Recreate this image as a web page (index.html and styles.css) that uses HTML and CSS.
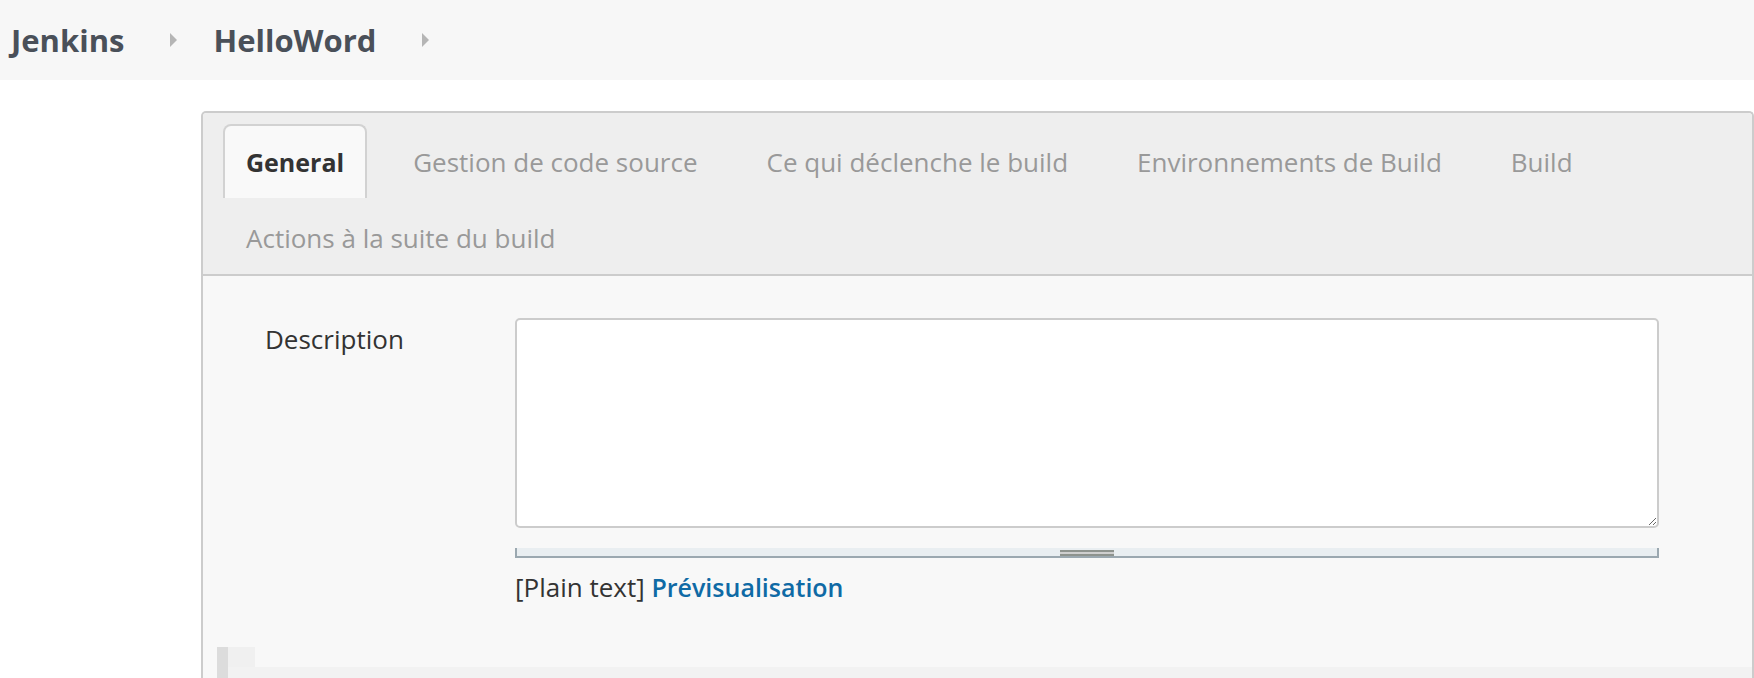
FILE: index.html
```html
<!DOCTYPE html>
<html lang="fr">
<head>
<meta charset="utf-8">
<title>HelloWord Config [Jenkins]</title>
<link rel="stylesheet" href="styles.css">
</head>
<body>
<header class="breadcrumbs">
  <a class="crumb" href="#">Jenkins</a>
  <span class="crumb-arrow"></span>
  <a class="crumb" href="#">HelloWord</a>
  <span class="crumb-arrow"></span>
</header>
<main class="main">
  <section class="config-panel">
    <nav class="tabbar">
      <span class="tab tab-active">General</span>
      <span class="tab">Gestion de code source</span>
      <span class="tab">Ce qui déclenche le build</span>
      <span class="tab">Environnements de Build</span>
      <span class="tab">Build</span>
      <span class="tab">Actions à la suite du build</span>
    </nav>
    <div class="tab-content">
      <div class="form-row">
        <label class="form-label" for="desc">Description</label>
        <div class="form-field">
          <textarea id="desc" class="desc-input"></textarea>
          <div class="resize-bar"><span class="grip"></span></div>
          <div class="format-line">[Plain text] <a href="#" class="preview-link">Prévisualisation</a></div>
        </div>
      </div>
      <div class="next-section">
        <div class="next-section-head"></div>
        <div class="next-section-band"></div>
      </div>
    </div>
  </section>
</main>
</body>
</html>
```
FILE: styles.css
```css
html, body {
  margin: 0;
  padding: 0;
  background: #ffffff;
  font-family: "Open Sans", "Noto Sans", sans-serif;
  color: #333333;
}

.breadcrumbs {
  height: 80px;
  background: #f7f7f7;
  display: flex;
  align-items: center;
  padding-left: 11px;
}

.crumb {
  font-size: 31px;
  font-weight: 700;
  color: #4a5059;
  text-decoration: none;
}

.crumb-arrow {
  width: 0;
  height: 0;
  border-top: 7px solid transparent;
  border-bottom: 7px solid transparent;
  border-left: 7px solid #b5b5b5;
  margin: 0 36px 0 46px;
}

.main {
  padding: 31px 0 0 201px;
}

.config-panel {
  border: 2px solid #cccccc;
  border-bottom: none;
  border-radius: 5px 5px 0 0;
  background: #f8f8f8;
}

.tabbar {
  background: #eeeeee;
  border-bottom: 2px solid #cccccc;
  border-radius: 4px 4px 0 0;
  padding: 11px 0 0 20px;
  display: flex;
  flex-wrap: wrap;
  row-gap: 2px;
}

.tab {
  height: 74px;
  box-sizing: border-box;
  padding: 0 21px;
  margin-right: 23px;
  display: flex;
  align-items: center;
  font-size: 26px;
  color: #999999;
  border: 2px solid transparent;
  border-bottom: none;
}

.tab-active {
  background: #f9f9f9;
  border-color: #d2d2d2;
  border-radius: 8px 8px 0 0;
  color: #333333;
  font-weight: 700;
  font-size: 25px;
}

.tab-content {
  background: #f8f8f8;
  padding-top: 42px;
}

.form-row {
  display: grid;
  grid-template-columns: 250px 1144px;
  padding-left: 62px;
}

.form-label {
  font-size: 26px;
  color: #333333;
  padding-top: 3px;
}

.form-field {
  display: flex;
  flex-direction: column;
}

.desc-input {
  height: 210px;
  box-sizing: border-box;
  border: 2px solid #cccccc;
  border-radius: 5px;
  background: #ffffff;
  resize: vertical;
  margin: 0;
}

.resize-bar {
  margin-top: 20px;
  height: 10px;
  box-sizing: border-box;
  background: #e9eef1;
  border: 2px solid #9ba8b0;
  border-top: none;
  display: flex;
  justify-content: center;
  align-items: flex-start;
}

.grip {
  width: 54px;
  height: 6px;
  margin-top: 2px;
  box-sizing: border-box;
  border-top: 2px solid #8e938e;
  border-bottom: 2px solid #8e938e;
  background: #cfcfcf;
}

.format-line {
  margin-top: 11px;
  font-size: 26px;
  color: #333333;
}

.preview-link {
  color: #0f6aa5;
  font-weight: 600;
  font-size: 25px;
  text-decoration: none;
}

.next-section {
  margin: 42px 0 0 14px;
  border-left: 11px solid #dcdcdc;
}

.next-section-head {
  width: 27px;
  height: 20px;
  background: #f0f0f0;
}

.next-section-band {
  height: 40px;
  background: #f2f2f2;
}
```
